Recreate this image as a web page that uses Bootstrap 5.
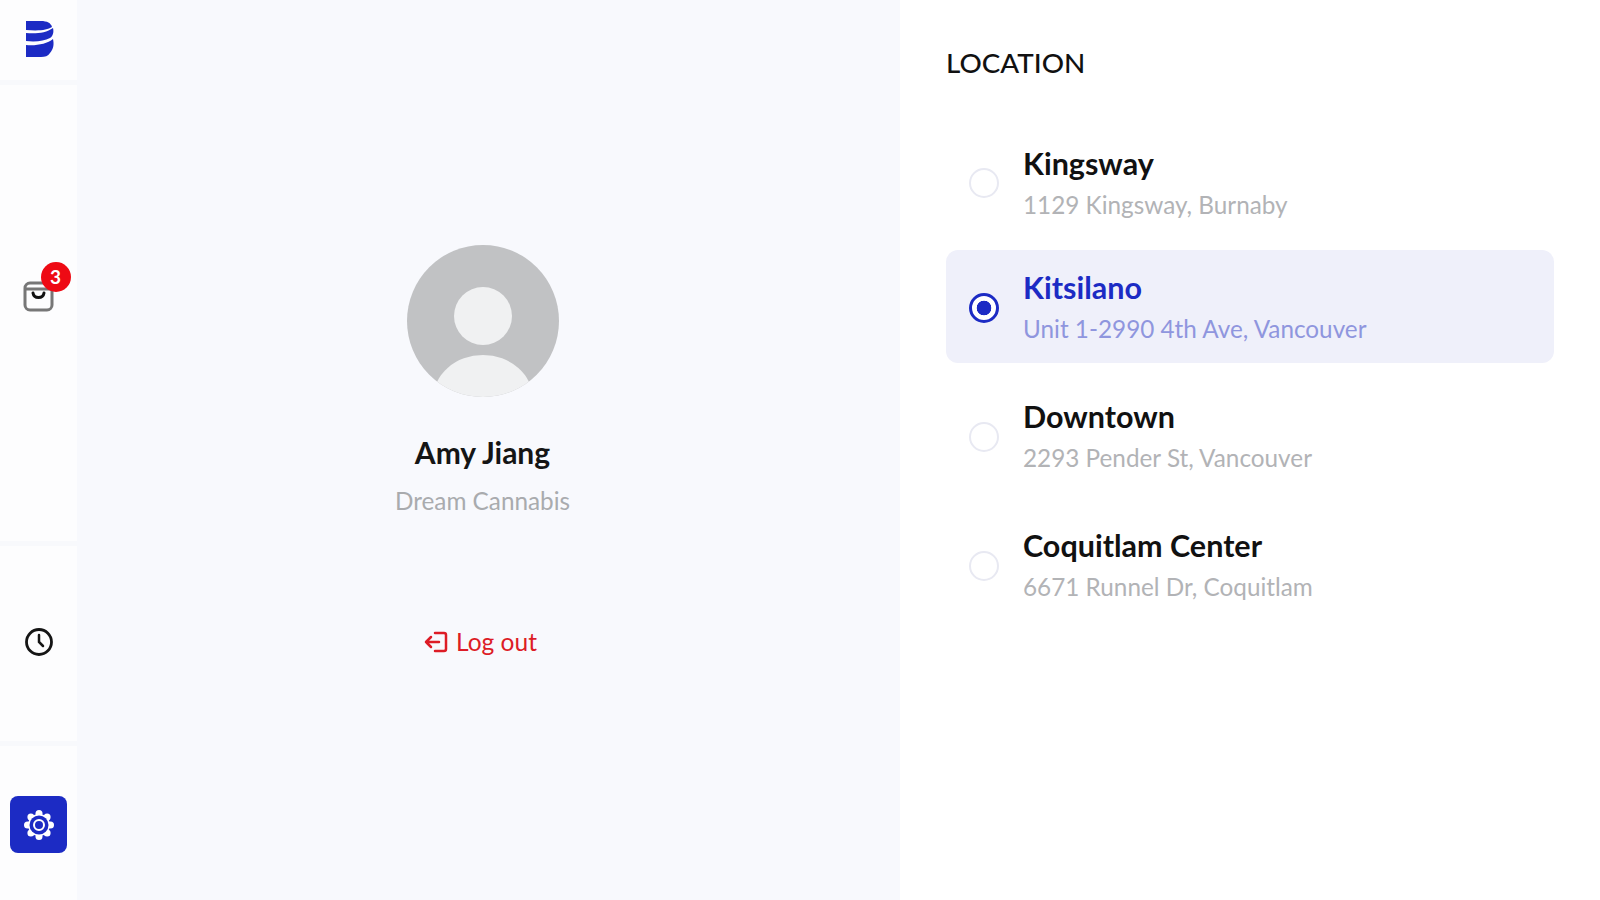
<!DOCTYPE html>
<html lang="en">

<head>
    <meta charset="UTF-8">
    <meta name="viewport" content="width=device-width, initial-scale=1.0">
    <title>Settings</title>
    <link href="https://cdn.jsdelivr.net/npm/bootstrap@5.3.0/dist/css/bootstrap.min.css" rel="stylesheet">
    <style>
        body {
            font-family: Lato, "Liberation Sans", sans-serif;
            background: #fff;
            color: #111;
            overflow: hidden;
        }

        .app-shell {
            height: 900px;
        }

        .side-rail {
            width: 77px;
            background: #f8f9fc;
            gap: 5px;
        }

        .rail-cell {
            background: #fdfdfe;
        }

        .rail-logo {
            height: 80px;
            padding-bottom: 2px;
        }

        .rail-cart {
            height: 456px;
            padding-top: 193px;
        }

        .rail-history {
            height: 195px;
            padding-bottom: 4px;
        }

        .rail-settings {
            flex: 1;
            padding-top: 50px;
        }

        .cart-wrap {
            width: 34px;
            height: 34px;
        }

        .cart-count {
            top: -16px;
            left: 19px;
            width: 30px;
            height: 30px;
            background: #ee0a14;
            color: #fff;
            font-size: 19px;
            font-weight: 700;
            line-height: 30px;
        }

        .settings-tile {
            width: 57px;
            height: 57px;
            background: #1c2bc4;
            border-radius: 8px;
        }

        .profile-pane {
            width: 823px;
            background: #f8f9fd;
            padding: 245px 12px 0 0;
        }

        .avatar-pic {
            width: 152px;
            height: 152px;
        }

        .profile-name {
            font-size: 30px;
            font-weight: 700;
            line-height: 34px;
            margin-top: 38px;
            color: #151515;
        }

        .profile-org {
            font-size: 24.3px;
            line-height: 28px;
            margin-top: 18px;
            color: #a9abae;
        }

        .logout-link {
            margin-top: 113px;
            padding-right: 4px;
            font-size: 24.5px;
            line-height: 28px;
            color: #dd1c26;
            text-decoration: none;
        }

        .location-pane {
            padding: 46px 46px 0 46px;
        }

        .location-title {
            font-size: 27.8px;
            line-height: 34px;
            font-weight: 500;
            margin: 0 0 50px;
            color: #111;
        }

        .location-list {
            gap: 16px;
        }

        .location-row {
            min-height: 113px;
            padding: 0 23px;
            gap: 24px;
            border-radius: 12px;
        }

        .location-row.first-row {
            min-height: 104px;
        }

        .location-row.picked {
            background: #eff0fa;
        }

        .location-row .form-check-input {
            width: 30px;
            height: 30px;
            margin: 2px 0 0;
            flex: none;
            background-color: #fff;
            border: 2px solid #e8e9f2;
        }

        .location-row .form-check-input:checked {
            border: 3px solid #1c2bc4;
            background-color: #fff;
            background-image: radial-gradient(circle, #1c2bc4 0 7px, transparent 7.6px);
        }

        .loc-name {
            font-size: 30.5px;
            line-height: 34px;
            font-weight: 700;
            color: #111;
        }

        .loc-addr {
            font-size: 24.3px;
            line-height: 28px;
            margin-top: 11px;
            color: #b2b3b6;
        }

        .picked .loc-name {
            color: #1c2bc4;
        }

        .picked .loc-addr {
            color: #8f96de;
        }
    </style>
</head>

<body>
    <div class="app-shell d-flex">
        <!-- Left rail -->
        <nav class="side-rail d-flex flex-column flex-shrink-0">
            <div class="rail-cell rail-logo d-flex align-items-center justify-content-center">
                <svg width="30" height="38" viewBox="0 0 30 38" fill="none">
                    <path d="M2 1h15c6 0 10 2 11 6-5 3-12 4-26 3z" fill="#1c2bc4" />
                    <path d="M2 13c10 1 20 0 27-5 1 4 0 8-3 10-6 3-14 4-24 3z" fill="#1c2bc4" />
                    <path d="M2 25c10 1 21-1 27-6 1 5 1 9-3 14-2 3-5 4-9 4H2z" fill="#1c2bc4" />
                </svg>
            </div>
            <div class="rail-cell rail-cart d-flex justify-content-center">
                <div class="cart-wrap position-relative">
                    <svg width="34" height="34" viewBox="0 0 34 34" fill="none" stroke="#3a3a3a" stroke-width="3">
                        <rect x="3" y="5" width="27" height="27" rx="5" stroke="#777" />
                        <path d="M3 11h27" stroke="#777" />
                        <path d="M11 15c1 6 10 6 11 0" stroke="#111" stroke-linecap="round" />
                    </svg>
                    <span class="cart-count position-absolute rounded-circle text-center">3</span>
                </div>
            </div>
            <div class="rail-cell rail-history d-flex align-items-center justify-content-center">
                <svg width="30" height="30" viewBox="0 0 30 30" fill="none" stroke="#151515" stroke-width="2.800">
                    <circle cx="15" cy="15" r="12.500" />
                    <path d="M15 8v7l4 4" stroke-width="2.500" stroke-linecap="round" />
                </svg>
            </div>
            <div class="rail-cell rail-settings d-flex justify-content-center">
                <div class="settings-tile d-flex align-items-center justify-content-center">
                    <svg width="34" height="34" viewBox="0 0 34 34">
                        <g fill="#fff">
                            <circle cx="17" cy="5.500" r="3.500" />
                            <circle cx="25.100" cy="8.900" r="3.500" />
                            <circle cx="28.500" cy="17" r="3.500" />
                            <circle cx="25.100" cy="25.100" r="3.500" />
                            <circle cx="17" cy="28.500" r="3.500" />
                            <circle cx="8.900" cy="25.100" r="3.500" />
                            <circle cx="5.500" cy="17" r="3.500" />
                            <circle cx="8.900" cy="8.900" r="3.500" />
                            <circle cx="17" cy="17" r="11" />
                        </g>
                        <circle cx="17" cy="17" r="9.500" fill="#1c2bc4" />
                        <circle cx="17" cy="17" r="5" fill="none" stroke="#fff" stroke-width="2" />
                    </svg>
                </div>
            </div>
        </nav>

        <!-- Profile -->
        <section class="profile-pane d-flex flex-column align-items-center flex-shrink-0">
            <svg class="avatar-pic" viewBox="0 0 152 152">
                <defs>
                    <clipPath id="avatarClip">
                        <circle cx="76" cy="76" r="76" />
                    </clipPath>
                </defs>
                <circle cx="76" cy="76" r="76" fill="#c1c2c4" />
                <circle cx="76" cy="71" r="29" fill="#f0f1f2" />
                <ellipse cx="76" cy="154" rx="50" ry="44" fill="#f0f1f2" clip-path="url(#avatarClip)" />
            </svg>
            <div class="profile-name">Amy Jiang</div>
            <div class="profile-org">Dream Cannabis</div>
            <a href="#" class="logout-link d-flex align-items-center gap-2">
                <svg width="24" height="24" viewBox="0 0 24 24" fill="none" stroke="#dd1c26" stroke-width="2.500" stroke-linecap="round" stroke-linejoin="round">
                    <path d="M11 3h9a2 2 0 0 1 2 2v14a2 2 0 0 1-2 2h-9" />
                    <path d="M15 12H2M7 7l-5 5 5 5" />
                </svg>
                Log out
            </a>
        </section>

        <!-- Location picker -->
        <section class="location-pane flex-grow-1">
            <h2 class="location-title">LOCATION</h2>
            <div class="location-list d-flex flex-column">
                <label class="location-row first-row d-flex align-items-center">
                    <input class="form-check-input" type="radio" name="location">
                    <span>
                        <span class="loc-name d-block">Kingsway</span>
                        <span class="loc-addr d-block">1129 Kingsway, Burnaby</span>
                    </span>
                </label>
                <label class="location-row picked d-flex align-items-center">
                    <input class="form-check-input" type="radio" name="location" checked>
                    <span>
                        <span class="loc-name d-block">Kitsilano</span>
                        <span class="loc-addr d-block">Unit 1-2990 4th Ave, Vancouver</span>
                    </span>
                </label>
                <label class="location-row d-flex align-items-center">
                    <input class="form-check-input" type="radio" name="location">
                    <span>
                        <span class="loc-name d-block">Downtown</span>
                        <span class="loc-addr d-block">2293 Pender St, Vancouver</span>
                    </span>
                </label>
                <label class="location-row d-flex align-items-center">
                    <input class="form-check-input" type="radio" name="location">
                    <span>
                        <span class="loc-name d-block">Coquitlam Center</span>
                        <span class="loc-addr d-block">6671 Runnel Dr, Coquitlam</span>
                    </span>
                </label>
            </div>
        </section>
    </div>

    <script src="https://cdn.jsdelivr.net/npm/bootstrap@5.3.0/dist/js/bootstrap.bundle.min.js"></script>
</body>

</html>
